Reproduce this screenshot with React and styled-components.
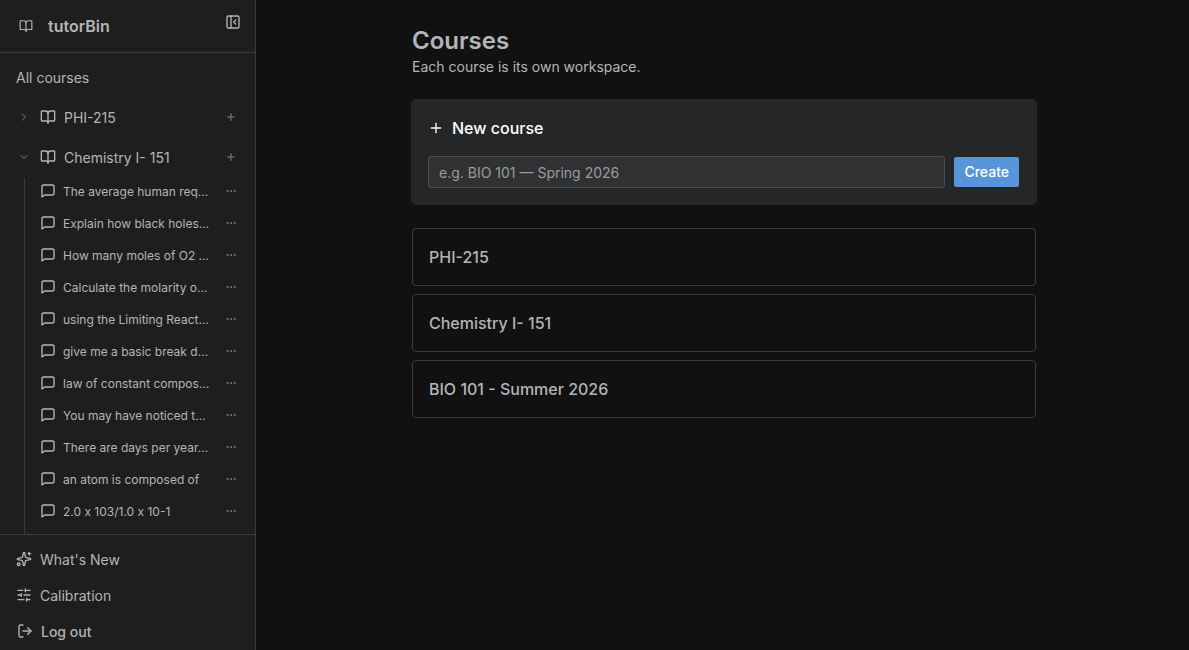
import React from 'react';
import styled, { createGlobalStyle } from 'styled-components';
import {
  BookOpen,
  ChevronDown,
  ChevronRight,
  Ellipsis,
  LogOut,
  PanelLeftClose,
  Plus,
  SlidersHorizontal,
  Sparkles,
} from 'lucide-react';

const COLORS = {
  page: '#111111',
  sidebar: '#1e1e1e',
  panel: '#242627',
  field: '#2f3132',
  line: '#3b3c3d',
  fieldLine: '#4a4e50',
  text: '#b4b5b8',
  muted: '#808183',
  accent: '#5895d8',
};

// Titles arrive already shortened
const CHATS = [
  'The average human req…',
  'Explain how black holes…',
  'How many moles of O2 …',
  'Calculate the molarity o…',
  'using the Limiting React…',
  'give me a basic break d…',
  'law of constant compos…',
  'You may have noticed t…',
  'There are days per year…',
  'an atom is composed of',
  '2.0 x 103/1.0 x 10-1',
];

const COURSES = [
  { name: 'PHI-215', chats: [] },
  { name: 'Chemistry I- 151', chats: CHATS, isOpen: true },
];

const WORKSPACES = ['PHI-215', 'Chemistry I- 151', 'BIO 101 - Summer 2026'];

const App = () => {
  return (
    <>
      <GlobalStyle />
      <Shell>
        <Sidebar />
        <Courses />
      </Shell>
    </>
  );
};

const Sidebar = () => {
  return (
    <Aside>
      <Header>
        <Logo size={14} />
        <Brand>tutorBin</Brand>
        <CollapseButton aria-label="Collapse sidebar">
          <PanelLeftClose size={16} />
        </CollapseButton>
      </Header>
      <Tree aria-label="Courses">
        <AllCourses href="#courses">All courses</AllCourses>
        {COURSES.map((course) => (
          <Course key={course.name} {...course} />
        ))}
      </Tree>
      <Footer>
        <FooterLink href="#new">
          <Sparkles size={16} />
          What's New
        </FooterLink>
        <FooterLink href="#calibration">
          <SlidersHorizontal size={16} />
          Calibration
        </FooterLink>
        <LogoutButton>
          <LogOut size={16} />
          Log out
        </LogoutButton>
      </Footer>
    </Aside>
  );
};

const Course = ({ name, chats, isOpen = false }) => {
  const Chevron = isOpen ? ChevronDown : ChevronRight;

  return (
    <div>
      <CourseRow>
        <IconButton aria-label={`Toggle ${name}`} aria-expanded={isOpen}>
          <Chevron size={12} />
        </IconButton>
        <CourseLink href="#course">
          <BookOpen size={16} />
          {name}
        </CourseLink>
        <IconButton aria-label={`New chat in ${name}`}>
          <Plus size={12} />
        </IconButton>
      </CourseRow>
      {isOpen && (
        <ChatList>
          {chats.map((chat) => (
            <ChatRow key={chat}>
              <ChatLink href="#chat">
                <Bubble />
                {chat}
              </ChatLink>
              <IconButton aria-label={`Options for ${chat}`}>
                <Ellipsis size={12} />
              </IconButton>
            </ChatRow>
          ))}
        </ChatList>
      )}
    </div>
  );
};

const Courses = () => {
  return (
    <Main>
      <Column>
        <Title>Courses</Title>
        <Subtitle>Each course is its own workspace.</Subtitle>
        <NewCourse onSubmit={(event) => event.preventDefault()}>
          <Label htmlFor="course-name">
            <Plus size={16} />
            New course
          </Label>
          <Fields>
            <Input
              id="course-name"
              placeholder="e.g. BIO 101 — Spring 2026"
            />
            <CreateButton>Create</CreateButton>
          </Fields>
        </NewCourse>
        <Workspaces>
          {WORKSPACES.map((name) => (
            <li key={name}>
              <Workspace href="#course">{name}</Workspace>
            </li>
          ))}
        </Workspaces>
      </Column>
    </Main>
  );
};

const Bubble = () => (
  <Glyph viewBox="0 0 24 24" aria-hidden="true">
    <path d="M21 16a2 2 0 0 1-2 2H7l-4 3V5a2 2 0 0 1 2-2h14a2 2 0 0 1 2 2z" />
  </Glyph>
);

const GlobalStyle = createGlobalStyle`
  *, *::before, *::after {
    box-sizing: border-box;
  }

  body {
    margin: 0;
    background: ${COLORS.page};
    color: ${COLORS.text};
    font-family: Inter, 'Liberation Sans', sans-serif;
    font-size: 14px;
    line-height: 20px;
  }

  button, input {
    font: inherit;
  }

  svg {
    flex-shrink: 0;
  }
`;

const Shell = styled.div`
  display: flex;
  height: 100vh;
`;

const Aside = styled.aside`
  display: flex;
  flex-direction: column;
  flex: 0 0 256px;
  min-width: 0;
  background: ${COLORS.sidebar};
  border-right: 1px solid ${COLORS.line};
`;

const Header = styled.header`
  display: flex;
  align-items: center;
  flex-shrink: 0;
  height: 53px;
  padding: 0 14px 0 19px;
  border-bottom: 1px solid ${COLORS.line};
`;

const Logo = styled(BookOpen)`
  margin-right: 15px;
`;

const Brand = styled.span`
  flex: 1;
  font-size: 16px;
  font-weight: 600;
  line-height: 24px;
`;

const UnstyledButton = styled.button`
  display: flex;
  align-items: center;
  padding: 0;
  border: none;
  background: transparent;
  color: inherit;
  cursor: pointer;
`;

const CollapseButton = styled(UnstyledButton)`
  align-self: flex-start;
  margin-top: 14px;
`;

const Tree = styled.nav`
  flex: 1;
  min-height: 0;
  padding: 5px 12px 0;
  overflow: hidden;

  svg {
    margin-bottom: 2px;
  }
`;

const AllCourses = styled.a`
  display: block;
  padding: 10px 4px;
  color: inherit;
  text-decoration: none;
`;

const IconButton = styled(UnstyledButton)`
  justify-content: center;
  flex-shrink: 0;
  width: 24px;
  height: 24px;
  color: ${COLORS.muted};
`;

const CourseRow = styled.div`
  display: flex;
  align-items: center;
  height: 40px;
`;

const CourseLink = styled.a`
  display: flex;
  align-items: center;
  flex: 1;
  gap: 8px;
  padding-left: 4px;
  color: inherit;
  text-decoration: none;
`;

const ChatList = styled.ul`
  margin: 0 0 0 12px;
  padding: 0 0 16px 15px;
  border-left: 1px solid ${COLORS.line};
  list-style: none;
`;

const ChatRow = styled.li`
  display: flex;
  align-items: center;
  height: 32px;
  padding-bottom: 4px;
`;

const ChatLink = styled.a`
  display: flex;
  align-items: center;
  flex: 1;
  gap: 7px;
  min-width: 0;
  color: inherit;
  font-size: 12px;
  text-decoration: none;
  white-space: nowrap;
`;

const Footer = styled.footer`
  flex-shrink: 0;
  padding: 7px 16px 0;
  border-top: 1px solid ${COLORS.line};

  svg {
    margin-bottom: 2px;
  }
`;

const FooterLink = styled.a`
  display: flex;
  align-items: center;
  gap: 8px;
  height: 36px;
  color: inherit;
  text-decoration: none;
`;

const LogoutButton = styled(UnstyledButton)`
  gap: 8px;
  height: 36px;
  padding-left: 1px;
  font-weight: 500;
`;

const Glyph = styled.svg`
  width: 16px;
  height: 16px;
  fill: none;
  stroke: currentColor;
  stroke-width: 2;
  stroke-linecap: round;
  stroke-linejoin: round;
`;

const Main = styled.main`
  flex: 1;
  min-width: 0;
  padding: 25px 24px 24px 27px;
  overflow: auto;
`;

const Column = styled.div`
  max-width: 624px;
  margin: 0 auto;
`;

const Title = styled.h1`
  margin: 0;
  font-size: 24px;
  font-weight: 600;
  line-height: 32px;
`;

const Subtitle = styled.p`
  margin: 0 0 23px;
`;

const NewCourse = styled.form`
  display: flex;
  flex-direction: column;
  gap: 16px;
  padding: 16px;
  border-radius: 4px;
  background: ${COLORS.panel};
  box-shadow: 0 0 0 1px ${COLORS.panel};
`;

const Label = styled.label`
  display: flex;
  align-items: center;
  gap: 8px;
  color: white;
  font-size: 16px;
  font-weight: 500;
  line-height: 24px;
`;

const Fields = styled.div`
  display: flex;
  align-items: center;
  gap: 9px;
`;

const Input = styled.input`
  flex: 1;
  min-width: 0;
  height: 32px;
  padding: 0 10px;
  border: 1px solid ${COLORS.fieldLine};
  border-radius: 3px;
  background: ${COLORS.field};
  color: white;

  &::placeholder {
    color: #9a9c9e;
    opacity: 1;
  }
`;

const CreateButton = styled(UnstyledButton)`
  height: 30px;
  margin-right: 1px;
  padding: 0 10px;
  border-radius: 2px;
  background: ${COLORS.accent};
  color: white;
  font-weight: 500;
`;

const Workspaces = styled.ul`
  display: flex;
  flex-direction: column;
  gap: 8px;
  margin: 24px 0 0;
  padding: 0;
  list-style: none;
`;

const Workspace = styled.a`
  display: block;
  padding: 16px;
  border: 1px solid ${COLORS.line};
  border-radius: 4px;
  color: inherit;
  font-size: 16px;
  font-weight: 500;
  line-height: 24px;
  text-decoration: none;
`;

export default App;
